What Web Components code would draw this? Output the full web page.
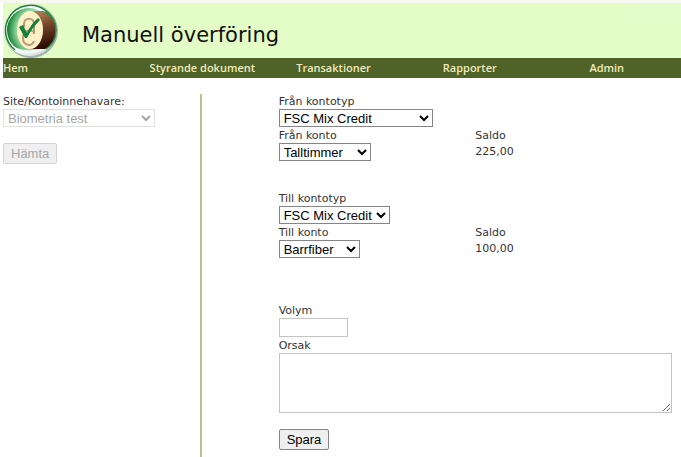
<!DOCTYPE html>
<html lang="sv">
<head>
<meta charset="utf-8">
<meta name="viewport" content="width=device-width, initial-scale=1">
<title>Manuell överföring</title>
<style>
  :root {
    --header-color: #e4fdc6;
    --nav-color: #4f6228;
    --nav-text: #efebbd;
    --line-color: #b7c295;
    --control-font: "Liberation Sans", Arial, sans-serif;
  }
  html, body {
    height: 100%;
  }
  body {
    margin: 0;
    background: #fff;
    color: #333;
    font: 11px/15px "DejaVu Sans", Verdana, sans-serif;
  }
</style>
</head>
<body>
<transfer-page>
  <page-header slot="header">Manuell överföring</page-header>
  <nav-bar slot="nav"></nav-bar>

  <form-stack slot="side">
    <select-field label="Site/Kontoinnehavare:" value="Biometria test" disabled></select-field>
    <action-button disabled>Hämta</action-button>
  </form-stack>

  <account-group>
    <select-field label="Från kontotyp" value="FSC Mix Credit" size="wide"></select-field>
    <select-field slot="account" label="Från konto" value="Talltimmer" size="medium"></select-field>
    <span slot="balance">225,00</span>
  </account-group>
  <account-group>
    <select-field label="Till kontotyp" value="FSC Mix Credit" size="large"></select-field>
    <select-field slot="account" label="Till konto" value="Barrfiber" size="small"></select-field>
    <span slot="balance">100,00</span>
  </account-group>
  <form-stack>
    <text-field label="Volym"></text-field>
    <text-field label="Orsak" multiline></text-field>
    <action-button>Spara</action-button>
  </form-stack>
</transfer-page>

<script>
class TransferPage extends HTMLElement {
  constructor() {
    super();
    this.attachShadow({ mode: 'open' });
    this.shadowRoot.innerHTML = `
      <style>
        :host {
          box-sizing: border-box;
          display: flex;
          flex-direction: column;
          min-height: 100%;
          border-top: 3px solid #f7f9f1;
          padding-left: 3px;
        }
        .content {
          flex: 1;
          display: grid;
          grid-template-columns: 29fr 71fr;
          margin-top: 16px;
        }
        main {
          display: flex;
          flex-direction: column;
          gap: 30px;
          border-left: 2px solid var(--line-color);
          padding: 0 9px 7px 16%;
        }
        ::slotted(form-stack:not([slot])) {
          margin-top: 15px;
        }
      </style>
      <slot name="header"></slot>
      <slot name="nav"></slot>
      <div class="content">
        <aside><slot name="side"></slot></aside>
        <main><slot></slot></main>
      </div>
    `;
  }
}

class PageHeader extends HTMLElement {
  constructor() {
    super();
    this.attachShadow({ mode: 'open' });
    this.shadowRoot.innerHTML = `
      <style>
        :host { display: block; }
        header {
          display: flex;
          align-items: center;
          gap: 23px;
          height: 55px;
          background: linear-gradient(#e2fdca, #e2fdca) right top / 56px 24px no-repeat var(--header-color);
        }
        svg { display: block; }
        h1 {
          margin: 8px 0 0;
          color: #111;
          font-size: 21px;
          font-weight: 400;
          line-height: 24px;
        }
      </style>
      <header>
        <svg width="56" height="55" viewBox="0 0 56 55" aria-hidden="true">
          <defs>
            <linearGradient id="glass" x1="0" x2="1" y1="0" y2="1">
              <stop offset="0" stop-color="#fff"/>
              <stop offset=".6" stop-color="#f2f7f4"/>
              <stop offset="1" stop-color="#c3d0cc"/>
            </linearGradient>
            <radialGradient id="green" cx=".72" cy=".5" r=".72">
              <stop offset=".45" stop-color="#eefaef"/>
              <stop offset=".75" stop-color="#7cc98e"/>
              <stop offset="1" stop-color="#0b7a2c"/>
            </radialGradient>
            <linearGradient id="wood" x1="0" x2=".2" y1="0" y2="1">
              <stop offset="0" stop-color="#b58b60"/>
              <stop offset=".45" stop-color="#79492b"/>
              <stop offset="1" stop-color="#2c0c05"/>
            </linearGradient>
          </defs>
          <circle cx="28" cy="28" r="27" fill="#a3b1b0"/>
          <circle cx="27" cy="27" r="26" fill="url(#glass)"/>
          <path d="M12 47A25 25 0 1 1 49 40" fill="none" stroke="#1b7f36" stroke-width="1.500"/>
          <circle cx="26" cy="27" r="22" fill="url(#green)"/>
          <path d="M9 43Q17 51 29 50Q40 49 46 42Q35 48 24 47Q15 46 9 43Z" fill="#fff" opacity=".8"/>
          <path d="M27 8H40C49 10 53 19 53 27C53 36 49 43 42 46H27Z" fill="url(#wood)"/>
          <path d="M42 9C50 13 53 20 53 27C53 36 49 42 43 46" fill="none" stroke="#2a8d42" stroke-width="1.500"/>
          <ellipse cx="27" cy="27" rx="13" ry="19" fill="#fff1c6"/>
          <g fill="none" stroke="#b49a76" stroke-width="2">
            <path d="M21 24V21C21 14 31 14 31 21V31"/>
            <path d="M31 29C26 26 20 28 20 35C20 43 29 44 31 38"/>
          </g>
          <path d="M16 24L20 22L24 30Q28 21 35 15L37 17Q29 25 24 35H22Z" fill="#11823a"/>
        </svg>
        <h1><slot></slot></h1>
      </header>
    `;
  }
}

class NavBar extends HTMLElement {
  constructor() {
    super();
    this.attachShadow({ mode: 'open' });
    this.shadowRoot.innerHTML = `
      <style>
        :host { display: block; }
        nav {
          display: grid;
          grid-template-columns: repeat(4, 8fr) 5fr;
          background: var(--nav-color);
          font: 600 11px/20px "Open Sans", "Noto Sans", sans-serif;
        }
        a {
          color: var(--nav-text);
          text-decoration: none;
          white-space: nowrap;
        }
        a:hover { text-decoration: underline; }
      </style>
      <nav>
        <a href="#hem">Hem</a>
        <a href="#dokument">Styrande dokument</a>
        <a href="#transaktioner">Transaktioner</a>
        <a href="#rapporter">Rapporter</a>
        <a href="#admin">Admin</a>
      </nav>
    `;
  }
}

class FormStack extends HTMLElement {
  constructor() {
    super();
    this.attachShadow({ mode: 'open' });
    this.shadowRoot.innerHTML = `
      <style>
        :host {
          display: flex;
          flex-direction: column;
          gap: 1px;
        }
        ::slotted(action-button) { margin-top: 15px; }
      </style>
      <slot></slot>
    `;
  }
}

// Account type on top, account and its balance side by side below
class AccountGroup extends HTMLElement {
  constructor() {
    super();
    this.attachShadow({ mode: 'open' });
    this.shadowRoot.innerHTML = `
      <style>
        :host {
          display: grid;
          grid-template-columns: 1fr 1fr;
          row-gap: 1px;
        }
        .type { grid-column: 1 / -1; }
        .balance { line-height: 16px; }
      </style>
      <div class="type"><slot></slot></div>
      <slot name="account"></slot>
      <div class="balance">
        <div>Saldo</div>
        <slot name="balance"></slot>
      </div>
    `;
  }
}

class SelectField extends HTMLElement {
  constructor() {
    super();
    this.attachShadow({ mode: 'open' });
    this.shadowRoot.innerHTML = `
      <style>
        :host { display: block; }
        label { display: block; }
        select {
          display: block;
          box-sizing: border-box;
          width: 152px;
          height: 18px;
          margin: 0;
          padding: 0;
          border: 1px solid #858585;
          border-radius: 0;
          background-color: #fff;
          color: #000;
          font: 13px var(--control-font);
        }
        select:disabled { border-color: #d5d5d5; color: #808080; }
        :host([size="wide"]) select { width: 154px; }
        :host([size="large"]) select { width: 111px; }
        :host([size="medium"]) select { width: 92px; }
        :host([size="small"]) select { width: 81px; }
      </style>
      <label for="control"></label>
      <select id="control"><option></option></select>
    `;
    this.shadowRoot.querySelector('label').textContent = this.getAttribute('label');
    this.shadowRoot.querySelector('option').textContent = this.getAttribute('value');
    this.shadowRoot.querySelector('select').disabled = this.hasAttribute('disabled');
  }
}

class TextField extends HTMLElement {
  constructor() {
    super();
    this.attachShadow({ mode: 'open' });
    const control = this.hasAttribute('multiline')
      ? '<textarea id="control"></textarea>'
      : '<input id="control" type="text">';
    this.shadowRoot.innerHTML = `
      <style>
        :host { display: block; }
        label { display: block; }
        input, textarea {
          display: block;
          box-sizing: border-box;
          margin: 0;
          padding: 1px 2px;
          border: 1px solid #c4c4c4;
          border-radius: 0;
          font: 13px var(--control-font);
        }
        input { width: 69px; height: 19px; }
        textarea { width: 100%; height: 60px; }
      </style>
      <label for="control"></label>
      ${control}
    `;
    this.shadowRoot.querySelector('label').textContent = this.getAttribute('label');
  }
}

class ActionButton extends HTMLElement {
  constructor() {
    super();
    this.attachShadow({ mode: 'open' });
    this.shadowRoot.innerHTML = `
      <style>
        :host { display: block; }
        button {
          display: block;
          margin: 0;
          padding: 2px 7px;
          border: 1px solid #858585;
          border-radius: 2px;
          background: #efefef;
          color: #000;
          font: 13px/15px var(--control-font);
        }
        button:disabled { border-color: #d3d3d3; color: #a8a8a8; }
      </style>
      <button type="button"><slot></slot></button>
    `;
    this.shadowRoot.querySelector('button').disabled = this.hasAttribute('disabled');
  }
}

customElements.define('transfer-page', TransferPage);
customElements.define('page-header', PageHeader);
customElements.define('nav-bar', NavBar);
customElements.define('form-stack', FormStack);
customElements.define('account-group', AccountGroup);
customElements.define('select-field', SelectField);
customElements.define('text-field', TextField);
customElements.define('action-button', ActionButton);
</script>
</body>
</html>
